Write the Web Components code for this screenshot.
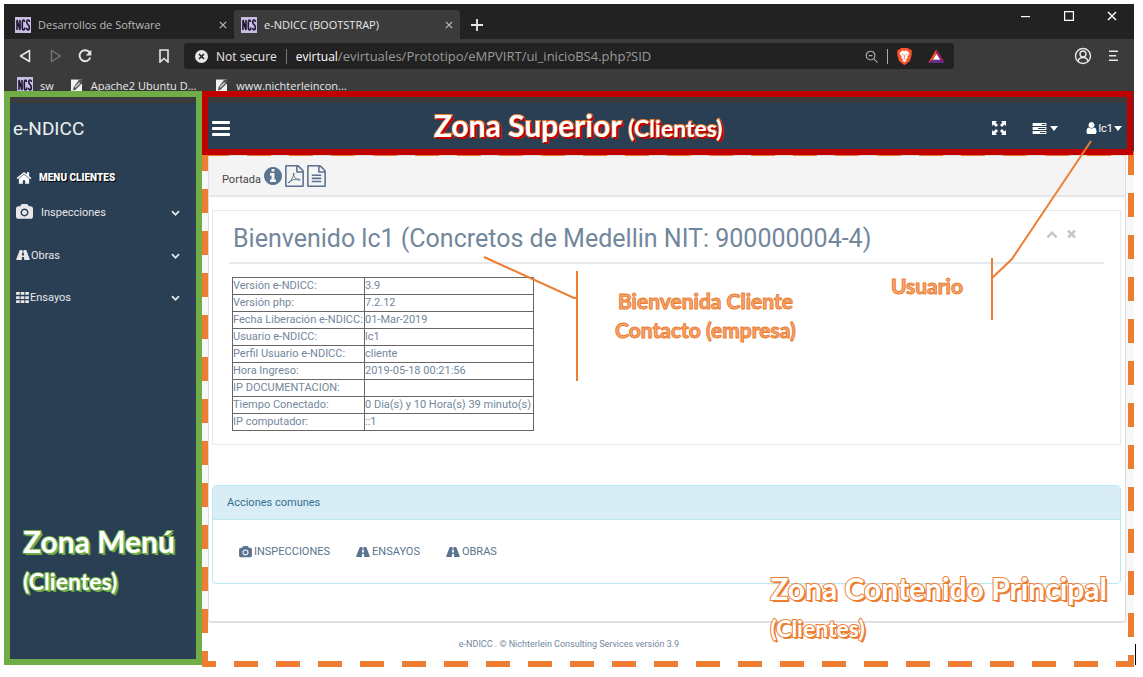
<!DOCTYPE html>
<html lang="es">
<head>
<meta charset="utf-8">
<title>e-NDICC (BOOTSTRAP)</title>
<style>
  body { margin: 0; padding: 4px 9px 12px 4px; background: #fff; font-family: Roboto, "Liberation Sans", sans-serif; font-size: 11px; color: #73879c; }
</style>
</head>
<body>
<browser-window></browser-window>

<script>
const fa = {
  camera: ['-64 0 1920 1792', '<path d="M896 672q119 0 203.500 84.500t84.500 203.500-84.500 203.500-203.500 84.500-203.500-84.500-84.500-203.500 84.500-203.500 203.500-84.500zm704-416q106 0 181 75t75 181v896q0 106-75 181t-181 75h-1408q-106 0-181-75t-75-181v-896q0-106 75-181t181-75h224l51-136q19-49 69.500-84.500t103.500-35.500h512q53 0 103.500 35.500t69.500 84.500l51 136h224zm-704 1152q185 0 316.500-131.500t131.500-316.500-131.500-316.500-316.500-131.500-316.500 131.500-131.500 316.500 131.500 316.500 316.500 131.500z"/>'],
  home: ['0 0 1792 1792', '<path d="M1472 992v480q0 26-19 45t-45 19h-384v-384h-256v384h-384q-26 0-45-19t-19-45v-480q0-1 .5-3t.5-3l575-474 575 474q1 2 1 6zm223-69l-62 74q-8 9-21 11h-3q-13 0-21-7l-692-577-692 577q-12 8-24 7-13-2-21-11l-62-74q-8-10-7-23.500t11-21.500l719-599q32-26 76-26t76 26l244 204v-195q0-14 9-23t23-9h192q14 0 23 9t9 23v408l219 182q10 8 11 21.500t-7 23.500z"/>'],
  road: ['0 3 26 19', '<path fill-rule="evenodd" d="M8 3h4l-.2 3h2.400l-.2-3h4q1 0 1.400 1l6 16q.4 2-.6 2h-9.600l-.4-6h-3.600l-.4 6H1.200q-1 0-.6-2l6-16Q7 3 8 3zM11.600 8l-.5 5.500h3.800L14.400 8z"/>'],
  th: ['0 0 14 12', '<path d="M0 0h4v3H0zM5 0h4v3H5zM10 0h4v3h-4zM0 4.500h4v3H0zM5 4.500h4v3H5zM10 4.500h4v3h-4zM0 9h4v3H0zM5 9h4v3H5zM10 9h4v3h-4z"/>'],
  down: ['0 0 1792 1792', '<path d="M1683 808l-742 741q-19 19-45 19t-45-19l-742-741q-19-19-19-45.500t19-45.500l166-165q19-19 45-19t45 19l531 531 531-531q19-19 45-19t45 19l166 165q19 19 19 45.500t-19 45.500z"/>'],
  up: ['0 0 1792 1792', '<path transform="matrix(1 0 0 -1 0 1900)" d="M1683 808l-742 741q-19 19-45 19t-45-19l-742-741q-19-19-19-45.500t19-45.500l166-165q19-19 45-19t45 19l531 531 531-531q19-19 45-19t45 19l166 165q19 19 19 45.500t-19 45.500z"/>'],
  times: ['250 380 1290 1290', '<path d="M1490 1322q0 40-28 68l-136 136q-28 28-68 28t-68-28l-294-294-294 294q-28 28-68 28t-68-28l-136-136q-28-28-28-68t28-68l294-294-294-294q-28-28-28-68t28-68l136-136q28-28 68-28t68 28l294 294 294-294q28-28 68-28t68 28l136 136q28 28 28 68t-28 68l-294 294 294 294q28 28 28 68z"/>'],
  info: ['128 128 1536 1536', '<path d="M1152 1376v-160q0-14-9-23t-23-9h-96v-512q0-14-9-23t-23-9h-320q-14 0-23 9t-9 23v160q0 14 9 23t23 9h96v320h-96q-14 0-23 9t-9 23v160q0 14 9 23t23 9h448q14 0 23-9t9-23zm-128-896v-160q0-14-9-23t-23-9h-192q-14 0-23 9t-9 23v160q0 14 9 23t23 9h192q14 0 23-9t9-23zm640 416q0 209-103 385.500t-279.500 279.500-385.500 103-385.500-103-279.500-279.500-103-385.500 103-385.500 279.500-279.500 385.500-103 385.500 103 279.500 279.500 103 385.500z"/>'],
  pdf: ['128 0 1536 1792', '<path d="M1596 380q28 28 48 76t20 88v1152q0 40-28 68t-68 28h-1344q-40 0-68-28t-28-68v-1600q0-40 28-68t68-28h896q40 0 88 20t76 48zm-444-244v376h376q-10-29-22-41l-313-313q-12-12-41-22zm384 1528v-1024h-416q-40 0-68-28t-28-68v-416h-768v1536h1280z"/><path fill="none" stroke="currentColor" stroke-width="75" d="M830 650q-60 20-20 160 60 260 320 390 150 60 240 10 20-90-260-60-300 30-520 130-170 90-190 180 70 30 190-170 160-280 260-500 40-120-20-140z"/>'],
  file: ['128 0 1536 1792', '<path d="M1596 380q28 28 48 76t20 88v1152q0 40-28 68t-68 28h-1344q-40 0-68-28t-28-68v-1600q0-40 28-68t68-28h896q40 0 88 20t76 48zm-444-244v376h376q-10-29-22-41l-313-313q-12-12-41-22zm384 1528v-1024h-416q-40 0-68-28t-28-68v-416h-768v1536h1280zM512 768h768v128H512zM512 1024h768v128H512zM512 1280h768v128H512z"/>'],
  user: ['256 128 1280 1536', '<path d="M1536 1399q0 109-62.500 187t-150.500 78h-854q-88 0-150.500-78t-62.500-187q0-85 8.500-160.500t31.500-152 58.500-131 94-89 134.500-34.500q131 128 313 128t313-128q76 0 134.500 34.500t94 89 58.500 131 31.500 152 8.500 160.500zm-256-887q0 159-112.500 271.500t-271.500 112.500-271.500-112.500-112.500-271.500 112.500-271.500 271.500-112.500 271.500 112.500 112.500 271.500z"/>'],
  bars: ['0 0 18 15', '<rect width="18" height="3" rx="1"/><rect y="6" width="18" height="3" rx="1"/><rect y="12" width="18" height="3" rx="1"/>'],
  expand: ['0 0 16 16', '<path d="M1 1h5L4.500 2.500l2.500 2.500-2 2L2.500 4.500 1 6zM15 1v5l-1.500-1.500L11 7 9 5l2.500-2.500L10 1zM1 15v-5l1.500 1.500L5 9l2 2-2.500 2.500L6 15zM15 15h-5l1.500-1.500L9 11l2-2 2.500 2.500L15 10z"/>'],
  tasks: ['0 0 15 12', '<path fill-rule="evenodd" d="M0 0h15v3.300H0zM10 1.200v1h4v-1zM0 4.300h15v3.300H0zM6 5.500v1h8v-1zM0 8.600h15V12H0zM8 9.800v1h6v-1z"/>'],
  caret: ['0 0 8 5', '<path d="M0 0h8L4 5z"/>'],
  ncs: ['0 0 16 16', '<rect width="16" height="16" fill="#c9bde6"/><path fill="none" stroke="#1d1830" stroke-width="1.600" d="M2 13V3l3 10V3M9.500 5q0-2-1-2T7.300 6v4q0 3 1.200 3t1.200-2.500M14.500 5q-.2-2-1.400-2-1.400 0-1.300 2.300.1 1.500 1.300 2.300 1.200 1 1.200 2.800 0 2.400-1.400 2.500-1.200 0-1.400-2"/>'],
  note: ['0 0 12 13', '<path fill="#f2f2f2" d="M0 0h12v13H0z"/><path fill="#555" d="M9 0h3v4L5 11l-3 1 1-4z"/><path fill="#ddd" d="M4 8l5-5 1 1-5 5z"/>'],
  back: ['0 0 12 14', '<path fill="none" stroke="currentColor" stroke-width="1.500" stroke-linejoin="round" d="M10.500 1.500v11L1.500 7z"/>'],
  forward: ['0 0 12 14', '<path fill="none" stroke="currentColor" stroke-width="1.300" stroke-linejoin="round" d="M1.500 1.500v11L10.500 7z"/>'],
  reload: ['0 0 14 14', '<path fill="none" stroke="currentColor" stroke-width="1.900" d="M11.600 3.500A5.500 5.500 0 1 0 12.300 8.500"/><path d="M13.300.8v5.700H7.800z"/>'],
  mark: ['0 0 10 14', '<path fill="none" stroke="currentColor" stroke-width="1.600" d="M1 1h8v12L5 9.500 1 13z"/>'],
  insecure: ['0 0 14 14', '<circle cx="7" cy="7" r="7"/><path stroke="#222" stroke-width="1.800" d="M4.300 4.300l5.400 5.400M9.700 4.300L4.300 9.700"/>'],
  zoomout: ['0 0 14 14', '<g fill="none" stroke="currentColor" stroke-width="1.200"><circle cx="6" cy="6" r="4.700"/><path d="M9.500 9.500l4 4M4 6h4"/></g>'],
  brave: ['0 0 15 17', '<path fill="#fb542b" d="M4 0h7l1.500 1.600 1.500-.1 1 2.500-.5 1.500.3 1-1.800 6.500L8.500 16.500l-1 .5-1-.5L2 13 .2 6.500l.3-1L0 4l1-2.500 1.500.1z"/><path fill="#fff" d="M7.500 3l2-.4L12 4.500l.3 1.500-2 2.800.4 1.400-1.900 1.300 1 1-2.300 1.800-2.300-1.800 1-1-1.900-1.300.4-1.400-2-2.800L3 4.500l2.500-1.900z"/><path stroke="#fb542b" fill="none" stroke-width=".7" d="M4.500 6l2 1M10.500 6l-2 1M7.500 7v3M6.200 11h2.600"/>'],
  bat: ['0 0 18 15', '<path fill="#ff4724" d="M9 0v5L5 11.500 0 15z"/><path fill="#9e1f63" d="M9 0l9 15-5-3.500L9 5z"/><path fill="#662d91" d="M0 15l5-3.500h8L18 15z"/><path fill="#fff" d="M9 5l4 6.500H5z"/>'],
  account: ['0 0 18 18', '<g fill="none" stroke="currentColor" stroke-width="1.400"><circle cx="9" cy="9" r="7.500"/><circle cx="9" cy="7" r="3"/><path d="M4 14.500q.5-4 5-4t5 4"/></g>'],
  menu: ['0 0 10 12', '<path d="M0 0h10v1.500H0zM0 5h8v1.500H0zM0 10h10v1.500H0z"/>'],
  cross: ['0 0 10 10', '<path fill="none" stroke="currentColor" stroke-width="1.500" d="M1 1l8 8M9 1L1 9"/>'],
  plus: ['0 0 12 12', '<path fill="none" stroke="currentColor" stroke-width="1.800" d="M6 0v12M0 6h12"/>'],
  min: ['0 0 10 10', '<path d="M0 5h9v1.200H0z"/>'],
  max: ['0 0 10 10', '<path fill="none" stroke="currentColor" stroke-width="1.200" d="M.6.6h8.800v8.800H.6z"/>']
};

const reset = `
  :host, *, *::before { box-sizing: border-box; }
  button { appearance: none; border: 0; padding: 0; margin: 0; background: none; color: inherit; font: inherit; display: flex; align-items: center; }
  a { color: inherit; text-decoration: none; display: flex; align-items: center; }
`;

function define(name, html, setup) {
  const template = document.createElement('template');
  template.innerHTML = html;
  customElements.define(name, class extends HTMLElement {
    constructor() {
      super();
      this.attachShadow({ mode: 'open' }).append(template.content.cloneNode(true));
    }
    connectedCallback() { if (setup) setup(this, this.shadowRoot); }
  });
}

/* <ui-icon name w h>: one glyph of the set above */
define('ui-icon', `<style>:host { display: inline-flex; flex: none; } svg { display: block; }</style>`, (host, root) => {
  if (root.querySelector('svg')) return;
  const [box, shape] = fa[host.getAttribute('name')];
  const w = host.getAttribute('w'), h = host.getAttribute('h') || w;
  root.innerHTML += `<svg aria-hidden="true" width="${w}" height="${h}" viewBox="${box}" fill="currentColor">${shape}</svg>`;
});

define('browser-tab', `<style>${reset}
  :host { display: flex; align-items: center; height: 29px; padding: 0 7px; border-radius: 3px 3px 0 0; color: #b9b9b9; }
  :host([active]) { background: #3b3b3b; color: #e8e8e8; }
  .title { gap: 7px; flex: 1; white-space: nowrap; }
  .close { color: #b9b9b9; }
</style>
<button class="title"><ui-icon name="ncs" w="16"></ui-icon><slot></slot></button>
<button class="close" aria-label="Cerrar"><ui-icon name="cross" w="8"></ui-icon></button>`);

define('browser-chrome', `<style>${reset}
  :host { display: block; background: #3b3b3b; color: #e8e8e8; font-family: "Open Sans", "Noto Sans", sans-serif; font-size: 11px; }
  .strip { display: flex; align-items: flex-end; height: 35px; background: #222; }
  .strip browser-tab:first-child { width: 230px; padding-left: 11px; }
  .strip browser-tab[active] { width: 226px; }
  .add { height: 29px; padding-left: 11px; }
  .win { display: flex; gap: 33px; margin-left: auto; align-self: flex-start; padding: 7px 17px 0 0; color: #fff; }
  .tools { display: flex; align-items: center; height: 34px; padding: 0 16px 0 15px; }
  .fwd { margin-left: 19px; color: #777; }
  .reload { margin-left: 16px; }
  .mark { margin-left: 67px; }
  .url { display: flex; align-items: center; flex: 1; height: 26px; margin: 0 120px 0 15px; padding: 0 9px 0 11px; border-radius: 3px; background: #222; font-size: 12px; white-space: nowrap; }
  .secure { gap: 8px; padding-right: 9px; border-right: 1px solid #777; line-height: 15px; }
  .site { margin-left: 9px; color: #fff; }
  input { flex: 1; min-width: 0; border: 0; padding: 0; background: none; color: #9a9a9a; font: inherit; font-size: 13px; outline: 0; }
  .zoom { padding-right: 9px; border-right: 1px solid #aaa; height: 15px; color: #aaa; }
  .brave { margin: 0 16px 0 9px; }
  .more { margin-left: 17px; }
  .marks { display: flex; height: 30px; padding: 3px 13px 0; align-items: flex-start; }
  .marks a { gap: 7px; height: 18px; white-space: nowrap; }
  .marks a + a { margin-left: 17px; gap: 9px; }
  .marks a:last-child { margin-left: 20px; }
</style>
<div class="strip">
  <browser-tab>Desarrollos de Software</browser-tab>
  <browser-tab active>e-NDICC (BOOTSTRAP)</browser-tab>
  <button class="add" aria-label="Nueva pestaña"><ui-icon name="plus" w="12"></ui-icon></button>
  <div class="win">
    <button aria-label="Minimizar"><ui-icon name="min" w="10"></ui-icon></button>
    <button aria-label="Maximizar"><ui-icon name="max" w="10"></ui-icon></button>
    <button aria-label="Cerrar"><ui-icon name="cross" w="10"></ui-icon></button>
  </div>
</div>
<div class="tools">
  <button aria-label="Atrás"><ui-icon name="back" w="12" h="14"></ui-icon></button>
  <button class="fwd" aria-label="Adelante"><ui-icon name="forward" w="12" h="14"></ui-icon></button>
  <button class="reload" aria-label="Recargar"><ui-icon name="reload" w="14"></ui-icon></button>
  <button class="mark" aria-label="Marcador"><ui-icon name="mark" w="10" h="14"></ui-icon></button>
  <div class="url">
    <button class="secure"><ui-icon name="insecure" w="13"></ui-icon>Not secure</button>
    <label class="site" for="path">evirtual</label>
    <input id="path" value="/evirtuales/Prototipo/eMPVIRT/ui_inicioBS4.php?SID">
    <button class="zoom" aria-label="Zoom"><ui-icon name="zoomout" w="13"></ui-icon></button>
    <button class="brave" aria-label="Brave"><ui-icon name="brave" w="15" h="17"></ui-icon></button>
    <button aria-label="Rewards"><ui-icon name="bat" w="17" h="14"></ui-icon></button>
  </div>
  <button aria-label="Perfil"><ui-icon name="account" w="18"></ui-icon></button>
  <button class="more" aria-label="Menú"><ui-icon name="menu" w="9" h="12"></ui-icon></button>
</div>
<nav class="marks">
  <a href="#sw"><ui-icon name="ncs" w="16"></ui-icon>sw</a>
  <a href="#apache"><ui-icon name="note" w="11" h="13"></ui-icon>Apache2 Ubuntu D...</a>
  <a href="#nichterlein"><ui-icon name="note" w="11" h="13"></ui-icon>www.nichterleincon...</a>
</nav>`);

/* coloured caption laid over a zone; colours come from custom properties */
define('zone-label', `<style>
  :host { position: absolute; z-index: 5; font-family: Lato, "Open Sans", sans-serif; font-weight: 700; font-size: 30px; line-height: 37px; white-space: nowrap;
    color: var(--fill, #fff); -webkit-text-stroke: 2px var(--line); paint-order: stroke fill; text-shadow: 1px 1px 0 var(--drop), 2px 2px 0 var(--drop); }
  ::slotted(small) { font-size: 23px; }
</style><slot></slot>`);

define('menu-item', `<style>${reset}
  :host { display: block; color: #e7e7e7; }
  button { width: 100%; height: 42px; gap: var(--gap, 1px); text-align: left; }
  .label { flex: 1; }
</style>
<button><slot name="icon"></slot><span class="label"><slot></slot></span><ui-icon name="down" w="9"></ui-icon></button>`);

define('side-menu', `<style>${reset}
  :host { display: block; position: relative; background: #2a3f54; color: #ecf0f1; }
  .frame { position: absolute; z-index: 3; inset: -12px 0 0; border: 6px solid #70ad47; }
  .brand { height: 50px; padding-left: 9px; font-size: 19px; }
  h3 { display: flex; align-items: center; gap: 7px; height: 27px; margin: 11px 0 0; padding-left: 12px; font-size: 10px; font-weight: 900; color: #fff; text-shadow: 1px 1px #000; }
  nav { padding: 0 22px 0 12px; }
  menu-item:first-child { --gap: 8px; margin-bottom: 1px; }
  zone-label { --line: #70ad47; --drop: #70ad47; left: 19px; top: 420px; }
</style>
<div class="frame"></div>
<a class="brand" href="#inicio">e-NDICC</a>
<h3><ui-icon name="home" w="16"></ui-icon>MENU CLIENTES</h3>
<nav>
  <menu-item><ui-icon slot="icon" name="camera" w="17" h="16"></ui-icon>Inspecciones</menu-item>
  <menu-item><ui-icon slot="icon" name="road" w="14" h="12"></ui-icon>Obras</menu-item>
  <menu-item><ui-icon slot="icon" name="th" w="13" h="11"></ui-icon>Ensayos</menu-item>
</nav>
<zone-label>Zona Menú<br><small>(Clientes)</small></zone-label>`);

define('top-bar', `<style>${reset}
  :host { display: flex; align-items: center; position: relative; z-index: 2; height: 48px; padding: 2px 12px 0 10px; background: #2a3f54; color: #fff; }
  .frame { position: absolute; inset: -12px 1px -4px 0; border: 6px solid #c00000; }
  .expand { margin-left: auto; }
  .tasks { gap: 3px; margin-left: 25px; }
  .user { gap: 1px; margin-left: 28px; }
  zone-label { --line: #ed7d31; --drop: #c00000; left: 232px; top: 4px; }
</style>
<div class="frame"></div>
<button aria-label="Menú"><ui-icon name="bars" w="18" h="15"></ui-icon></button>
<zone-label>Zona Superior <small>(Clientes)</small></zone-label>
<button class="expand" aria-label="Pantalla completa"><ui-icon name="expand" w="16"></ui-icon></button>
<button class="tasks" aria-label="Tareas"><ui-icon name="tasks" w="15" h="11"></ui-icon><ui-icon name="caret" w="8" h="5"></ui-icon></button>
<button class="user"><ui-icon name="user" w="11" h="12"></ui-icon>lc1<ui-icon name="caret" w="8" h="5"></ui-icon></button>`);

define('info-table', `<style>
  :host { display: block; }
  table { border-collapse: collapse; border: 1px solid #333; }
  th, td { height: 16px; padding: 0; border: 1px solid #666; font-weight: 400; text-align: left; line-height: 16px; white-space: nowrap; }
  th { width: 131px; }
  td { width: 168px; }
</style><table><tbody></tbody></table>`, (host, root) => {
  const body = root.querySelector('tbody');
  if (body.rows.length) return;
  for (const [key, value] of [
    ['Versión e-NDICC:', '3.9'], ['Versión php:', '7.2.12'], ['Fecha Liberación e-NDICC:', '01-Mar-2019'],
    ['Usuario e-NDICC:', 'lc1'], ['Perfil Usuario e-NDICC:', 'cliente'], ['Hora Ingreso:', '2019-05-18 00:21:56'],
    ['IP DOCUMENTACION:', ''], ['Tiempo Conectado:', '0 Dia(s) y 10 Hora(s) 39 minuto(s)'], ['IP computador:', '::1']
  ]) body.insertAdjacentHTML('beforeend', `<tr><th scope="row">${key}</th><td>${value}</td></tr>`);
});

define('welcome-panel', `<style>${reset}
  :host { display: block; min-height: 235px; padding: 0 16px 13px; border: 1px solid #e6e9ed; background: #fff; }
  header { display: flex; align-items: flex-start; height: 53px; padding: 9px 28px 0 4px; border-bottom: 2px solid #e6e9ed; }
  h2 { flex: 1; margin: 0; font-size: 25px; font-weight: 400; line-height: 38px; white-space: nowrap; }
  .tool { margin: 9px 0 0 9px; color: #c5c7cb; }
  info-table { margin: 13px 0 0 3px; }
</style>
<header><h2><slot></slot></h2>
  <button class="tool" aria-label="Contraer"><ui-icon name="up" w="12"></ui-icon></button>
  <button class="tool" aria-label="Cerrar"><ui-icon name="times" w="9" h="11"></ui-icon></button>
</header>
<info-table></info-table>`);

define('actions-panel', `<style>${reset}
  :host { display: block; border: 1px solid #bce8f1; border-radius: 4px; background: #fff; overflow: hidden; }
  header { height: 34px; padding: 0 14px; line-height: 33px; background: #d9edf7; border-bottom: 1px solid #bce8f1; color: #31708f; }
  div { display: flex; gap: 26px; height: 63px; padding: 0 26px; color: #5a738e; }
  a { gap: 2px; }
</style>
<header>Acciones comunes</header>
<div>
  <a href="#inspecciones"><ui-icon name="camera" w="13" h="12"></ui-icon>INSPECCIONES</a>
  <a href="#ensayos"><ui-icon name="road" w="14" h="12"></ui-icon>ENSAYOS</a>
  <a href="#obras"><ui-icon name="road" w="14" h="12"></ui-icon>OBRAS</a>
</div>`);

define('main-zone', `<style>${reset}
  :host { display: block; position: relative; background: #fff; }
  .back { padding: 4px 8px 0 6px; background: #f7f7f7; }
  .page { border: 1px solid #ddd; border-bottom: 2px solid #e0e0e0; border-radius: 0 0 4px 4px; padding-bottom: 37px; background: #fff; }
  .crumbs { display: flex; align-items: center; gap: 3px; height: 41px; padding: 0 13px; background: #f4f4f4; border-bottom: 2px solid #e6e6e6; color: #444; }
  .crumbs a { color: #5a738e; }
  .crumbs span { padding-top: 7px; }
  welcome-panel { margin: 13px 4px 40px 3px; }
  actions-panel { margin: 0 4px 0 3px; }
  footer { height: 42px; padding-right: 198px; font-size: 9px; line-height: 43px; text-align: center; }
  .over { position: absolute; z-index: 1; overflow: visible; pointer-events: none; fill: none; stroke: #ed7d31; }
  .dash { inset: -1px 0 -2px; width: 100%; height: calc(100% + 3px); }
  .dash rect { x: 3px; y: 3px; width: calc(100% - 6px); height: calc(100% - 6px); stroke-width: 6px; stroke-dasharray: 24 18; }
  .welcome { left: 282px; top: 106px; stroke-width: 2px; }
  .usuario { right: 42px; top: -10px; z-index: 4; stroke-width: 2px; }
  zone-label { --line: #ed7d31; --drop: #ed7d31; }
  .hint { --fill: #f4a977; --drop: transparent; font-size: 21px; line-height: 29px; text-align: center; -webkit-text-stroke-width: 1px; paint-order: normal; }
  .hint.w { left: 413px; top: 135px; }
  .hint.u { right: 171px; top: 120px; }
  .zone { right: 27px; bottom: 18px; }
  .caret { position: absolute; right: -2px; bottom: 0; width: 1px; height: 21px; background: #000; }
</style>
<div class="back"><div class="page">
  <nav class="crumbs"><span>Portada</span>
    <a href="#info" aria-label="Información"><ui-icon name="info" w="18"></ui-icon></a>
    <a href="#pdf" aria-label="PDF"><ui-icon name="pdf" w="19" h="22"></ui-icon></a>
    <a href="#doc" aria-label="Documento"><ui-icon name="file" w="19" h="22"></ui-icon></a>
  </nav>
  <welcome-panel>Bienvenido lc1 (Concretos de Medellin NIT: 900000004-4)</welcome-panel>
  <actions-panel></actions-panel>
</div></div>
<footer>e-NDICC . © Nichterlein Consulting Services versión 3.9</footer>
<svg class="over dash" aria-hidden="true"><rect/></svg>
<svg class="over welcome" width="94" height="124" aria-hidden="true"><path d="M0 0L90 41h3M93 14v110"/></svg>
<svg class="over usuario" width="100" height="180" aria-hidden="true"><path d="M99 0L20 118 0 137M0 117v62"/></svg>
<zone-label class="hint w">Bienvenida Cliente<br>Contacto (empresa)</zone-label>
<zone-label class="hint u">Usuario</zone-label>
<zone-label class="zone">Zona Contenido Principal<br><small>(Clientes)</small></zone-label>
<div class="caret"></div>`);

define('browser-window', `<style>
  :host { display: block; }
  .app { display: grid; grid-template-columns: 198px minmax(0, 1fr); }
</style>
<browser-chrome></browser-chrome>
<div class="app"><side-menu></side-menu><main><top-bar></top-bar><main-zone></main-zone></main></div>`);
</script>
</body>
</html>
